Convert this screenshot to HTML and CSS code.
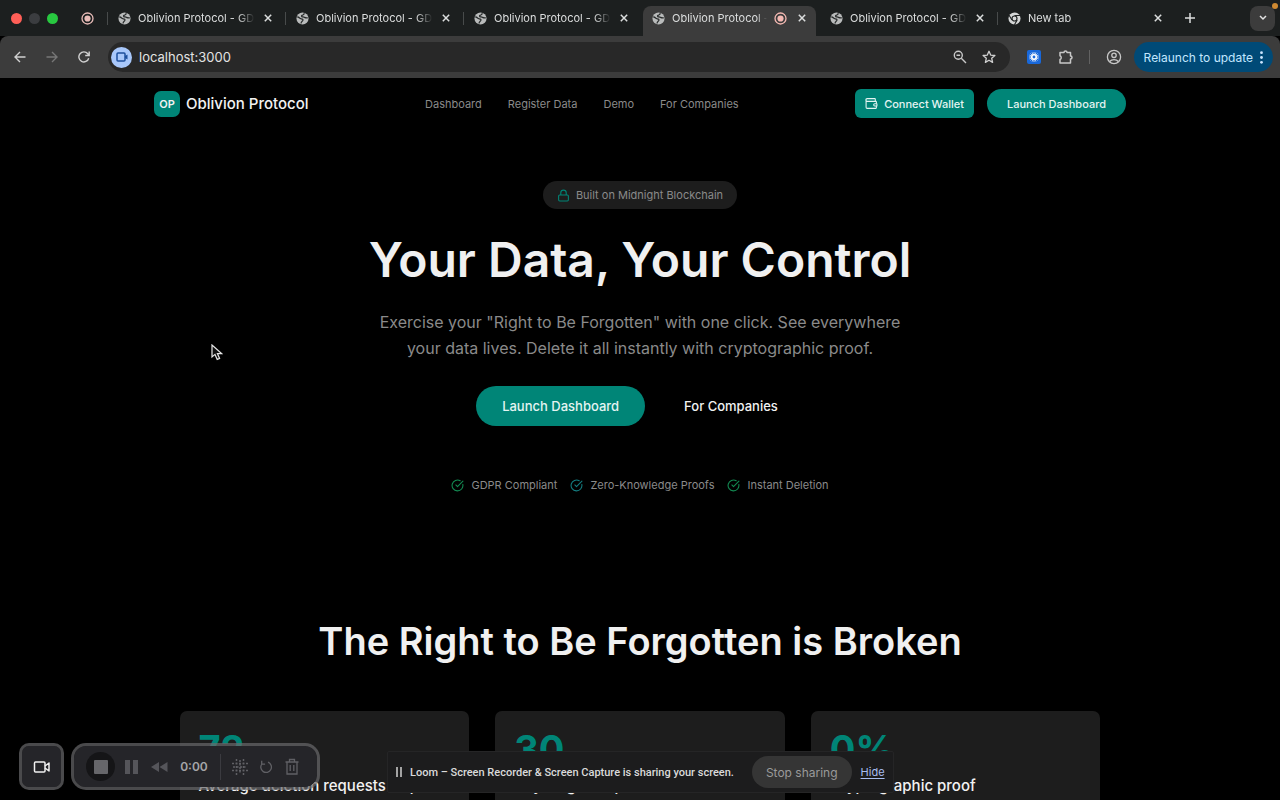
FILE: index.html
```html
<!DOCTYPE html>
<html lang="en">
<head>
<meta charset="utf-8">
<meta name="viewport" content="width=device-width, initial-scale=1">
<title>Oblivion Protocol - GDPR</title>
<link rel="stylesheet" href="styles.css">
</head>
<body>
<svg class="defs" aria-hidden="true">
  <symbol id="globe" viewBox="0 0 14 14"><circle cx="7" cy="7" r="6.5" fill="#b9bbbb"/><path d="M1.4 5.400C3.500 5.200 3.800 6.800 5.200 7.200 6.800 7.600 7.800 7.600 7.400 9 7 10.200 5.600 9.800 5.400 12.400M8.800 1.200C9 3 7.800 3.200 6.600 3.600 5.400 4.200 6.200 5.400 7.600 5.300 9 5.200 9.800 6.800 12.600 6.200" fill="none" stroke="#2a2d2d" stroke-width="1.400"/></symbol>
  <symbol id="x" viewBox="0 0 8 8"><path d="M.8.8l6.4 6.4M7.2.8L.8 7.2" stroke="#dcdede" stroke-width="1.5" fill="none"/></symbol>
  <symbol id="rec" viewBox="0 0 13 13"><circle cx="6.500" cy="6.500" r="5.500" fill="none" stroke="currentColor" stroke-width="1.300"/><circle cx="6.500" cy="6.500" r="3.100" fill="currentColor"/></symbol>
  <symbol id="check" viewBox="0 0 24 24"><path d="M21.8 10A10 10 0 1 1 17 3.335M9 11l3 3L22 4" fill="none" stroke="currentColor" stroke-width="2" stroke-linecap="round" stroke-linejoin="round"/></symbol>
</svg>
<div class="browser">
  <header class="tabbar">
    <div class="lights"><i class="light red"></i><i class="light gray"></i><i class="light green"></i></div>
    <svg class="pinned" width="13" height="13"><use href="#rec"/></svg>
    <div class="tab"><svg width="13" height="13"><use href="#globe"/></svg><span class="tab-title">Oblivion Protocol - GDPR</span><button class="close" aria-label="Close tab"><svg width="8" height="8"><use href="#x"/></svg></button></div>
    <div class="tab"><svg width="13" height="13"><use href="#globe"/></svg><span class="tab-title">Oblivion Protocol - GDPR</span><button class="close" aria-label="Close tab"><svg width="8" height="8"><use href="#x"/></svg></button></div>
    <div class="tab"><svg width="13" height="13"><use href="#globe"/></svg><span class="tab-title">Oblivion Protocol - GDPR</span><button class="close" aria-label="Close tab"><svg width="8" height="8"><use href="#x"/></svg></button></div>
    <div class="tab active"><svg width="13" height="13"><use href="#globe"/></svg><span class="tab-title">Oblivion Protocol - GDPR</span><svg class="tab-rec" width="13" height="13"><use href="#rec"/></svg><button class="close" aria-label="Close tab"><svg width="8" height="8"><use href="#x"/></svg></button></div>
    <div class="tab"><svg width="13" height="13"><use href="#globe"/></svg><span class="tab-title">Oblivion Protocol - GDPR</span><button class="close" aria-label="Close tab"><svg width="8" height="8"><use href="#x"/></svg></button></div>
    <div class="tab"><svg width="13" height="13" viewBox="0 0 14 14"><circle cx="7" cy="7" r="6.500" fill="#d5d7d7"/><circle cx="7" cy="7" r="2.700" fill="#d5d7d7" stroke="#202323" stroke-width="1.300"/><path d="M7 3.700h6M4.200 8.700 1.200 3.500M9.900 8.700 6.900 13.800" stroke="#202323" stroke-width="1.200"/></svg><span class="tab-title">New tab</span><button class="close" aria-label="Close tab"><svg width="8" height="8"><use href="#x"/></svg></button></div>
    <button class="newtab" aria-label="New tab"><svg width="10" height="10" viewBox="0 0 10 10"><path d="M5 0v10M0 5h10" stroke="#dcdede" stroke-width="1.500"/></svg></button>
    <button class="search-tabs" aria-label="Search tabs"><svg width="8" height="6" viewBox="0 0 8 6"><path d="M1 1l3 3 3-3" fill="none" stroke="#e3e3e3" stroke-width="1.500"/></svg><i class="alert"></i></button>
  </header>
  <div class="toolbar">
    <button class="tool" aria-label="Back"><svg width="12" height="12" viewBox="0 0 12 12"><path d="M11.500 6H1M6 1 1 6l5 5" fill="none" stroke="#d0d0d0" stroke-width="1.400"/></svg></button>
    <button class="tool" aria-label="Forward"><svg width="12" height="12" viewBox="0 0 12 12"><path d="M.5 6H11M6 1l5 5-5 5" fill="none" stroke="#777" stroke-width="1.400"/></svg></button>
    <button class="tool" aria-label="Reload"><svg width="12" height="12" viewBox="0 0 12 12"><path d="M10.700 7.200A5 5 0 1 1 9.800 2.800L11 4.200M11.200.5v4H7.200" fill="none" stroke="#d0d0d0" stroke-width="1.400"/></svg></button>
    <div class="omnibox">
      <span class="cam"><svg width="12" height="10" viewBox="0 0 12 10"><rect x="1" y="1" width="8" height="8" rx="1" fill="none" stroke="#1c4f9c" stroke-width="1.500"/><path d="M9 4l2.500-1.500v5L9 6z" fill="#1c4f9c"/></svg></span>
      <input class="url" type="text" value="localhost:3000" aria-label="Address">
      <button class="obtn" aria-label="Zoom"><svg width="14" height="14" viewBox="0 0 14 14"><circle cx="5.300" cy="5.300" r="4" fill="none" stroke="#c8c8c8" stroke-width="1.400"/><path d="M8.300 8.300l4.700 4.700M3.500 5.300h3.600" stroke="#c8c8c8" stroke-width="1.400"/></svg></button>
      <button class="obtn" aria-label="Bookmark"><svg width="14" height="14" viewBox="0 0 14 14"><path d="M7 1.300l1.700 3.800 4.200.4-3.200 2.800.9 4.100L7 10.200l-3.600 2.200.9-4.100L1.100 5.500l4.200-.4z" fill="none" stroke="#d0d0d0" stroke-width="1.300" stroke-linejoin="round"/></svg></button>
    </div>
    <button class="ext" aria-label="Loom"><svg width="14" height="14" viewBox="0 0 14 14"><rect width="14" height="14" rx="2" fill="#1868db"/><path d="M7 2v10M2 7h10M3.500 3.500l7 7M10.500 3.500l-7 7M5.100 2.400l3.800 9.200M8.900 2.400 5.100 11.600M2.400 5.100l9.200 3.800M2.400 8.900l9.200-3.800" stroke="#fff" stroke-width=".7"/><circle cx="7" cy="7" r="3" fill="#fff"/><circle cx="7" cy="7" r="1.400" fill="#1868db"/></svg></button>
    <button class="ext" aria-label="Extensions"><svg width="16" height="16" viewBox="0 0 16 16"><path d="M2 3.500h4a1.500 1.500 0 0 1 3 0h3.500V7a1.500 1.500 0 0 1 0 3v4H2v-3.500a2 2 0 0 0 0-3.700z" fill="none" stroke="#c8c8c8" stroke-width="1.500" stroke-linejoin="round"/></svg></button>
    <i class="divider"></i>
    <button class="ext" aria-label="Profile"><svg width="16" height="16" viewBox="0 0 16 16"><circle cx="8" cy="8" r="6.600" fill="none" stroke="#c8c8c8" stroke-width="1.300"/><circle cx="8" cy="6.300" r="2.200" fill="none" stroke="#c8c8c8" stroke-width="1.300"/><path d="M3.700 12.500c2-2.500 6.600-2.500 8.600 0" fill="none" stroke="#c8c8c8" stroke-width="1.300"/></svg></button>
    <button class="relaunch">Relaunch to update <svg width="3" height="13" viewBox="0 0 3 13"><g fill="#cbe6ff"><circle cx="1.500" cy="1.700" r="1.400"/><circle cx="1.500" cy="6.500" r="1.400"/><circle cx="1.500" cy="11.300" r="1.400"/></g></svg></button>
  </div>

  <div class="page">
    <nav class="nav">
      <a class="brand" href="#"><span class="logo">OP</span>Oblivion Protocol</a>
      <div class="links"><a href="#">Dashboard</a><a href="#">Register Data</a><a href="#">Demo</a><a href="#">For Companies</a></div>
      <div class="actions">
        <button class="btn wallet"><svg width="13" height="13" viewBox="0 0 24 24" fill="none" stroke="currentColor" stroke-width="2" stroke-linejoin="round"><path d="M19 8V4a1 1 0 0 0-1-1H4a2 2 0 0 0 0 5h16a1 1 0 0 1 1 1v3.500M21 16.500V20a1 1 0 0 1-1 1H4a2 2 0 0 1-2-2V5"/><path d="M22 12.500h-4a2 2 0 0 0 0 4h4z"/></svg>Connect Wallet</button>
        <button class="btn pill">Launch Dashboard</button>
      </div>
    </nav>
    <main>
      <section class="hero">
        <div class="badge"><svg width="13" height="13" viewBox="0 0 24 24" fill="none" stroke="currentColor" stroke-width="2"><rect x="3" y="11" width="18" height="11" rx="2"/><path d="M7 11V7a5 5 0 0 1 10 0v4"/></svg>Built on Midnight Blockchain</div>
        <h1>Your Data, Your Control</h1>
        <p class="lead">Exercise your "Right to Be Forgotten" with one click. See everywhere your data lives. Delete it all instantly with cryptographic proof.</p>
        <div class="cta"><button class="btn big">Launch Dashboard</button><button class="btn ghost">For Companies</button></div>
        <ul class="points">
          <li><svg class="green-icon" width="13" height="13"><use href="#check"/></svg>GDPR Compliant</li>
          <li><svg class="teal-icon" width="13" height="13"><use href="#check"/></svg>Zero-Knowledge Proofs</li>
          <li><svg class="green-icon" width="13" height="13"><use href="#check"/></svg>Instant Deletion</li>
        </ul>
      </section>
      <section class="problem">
        <h2>The Right to Be Forgotten is Broken</h2>
        <div class="cards">
          <article class="card"><strong class="stat">72</strong><h3>Average deletion requests required</h3></article>
          <article class="card"><strong class="stat">30</strong><h3>Days legal response</h3></article>
          <article class="card"><strong class="stat">0%</strong><h3>Cryptographic proof</h3></article>
        </div>
      </section>
    </main>

    <svg class="cursor" width="12" height="17" viewBox="0 0 12 17"><path d="M1 1v12l3-2.600 2.200 5 2.400-1-2.200-4.800h4.200z" fill="#111" stroke="#e6e6e6" stroke-width="1.200"/></svg>

    <div class="recorder">
      <button class="rec-cam" aria-label="Camera"><svg width="18" height="14" viewBox="0 0 18 14" fill="none" stroke="#f0f0f0" stroke-width="1.500" stroke-linejoin="round"><rect x="1.500" y="2" width="10.500" height="10" rx="1"/><path d="M12 6l4-3v8l-4-3"/></svg></button>
      <div class="rec-bar">
        <button class="stop" aria-label="Stop"><i></i></button>
        <button class="rb" aria-label="Pause"><svg width="13" height="14" viewBox="0 0 13 14"><path d="M0 0h5v14H0zM8 0h5v14H8z" fill="#55555a"/></svg></button>
        <button class="rb" aria-label="Rewind"><svg width="17" height="12" viewBox="0 0 17 12"><path d="M8 1v10L0 6zM16.500 1v10l-8-5z" fill="#55555a"/></svg></button>
        <span class="time">0:00</span>
        <i class="rec-divider"></i>
        <button class="rb" aria-label="Effects"><svg width="16" height="16" viewBox="0 0 16 16"><path d="M4.500 0v16M11.500 0v16M0 4.500h16M0 11.500h16M8 1v14M1 8h14" stroke="#606065" stroke-width="1.500" stroke-dasharray="2 1.500"/></svg></button>
        <button class="rb" aria-label="Restart"><svg width="13" height="14" viewBox="0 0 13 14"><path d="M2 3.800A5.300 5.300 0 1 0 8 2.200M1.700.8v3.400h3.400" fill="none" stroke="#606065" stroke-width="1.300"/></svg></button>
        <button class="rb" aria-label="Delete"><svg width="14" height="17" viewBox="0 0 14 17"><path d="M.5 4h13M4.500 4V1.500h5V4M2 4v12h10V4M5.200 7v6M8.800 7v6" fill="none" stroke="#606065" stroke-width="1.300"/></svg></button>
      </div>
    </div>

    <div class="share">
      <svg width="6" height="10" viewBox="0 0 6 10"><path d="M1 0v10M5 0v10" stroke="#ddd" stroke-width="1.400"/></svg>
      <span class="share-text">Loom – Screen Recorder &amp; Screen Capture is sharing your screen.</span>
      <button class="stop-share">Stop sharing</button>
      <a class="hide" href="#">Hide</a>
    </div>
  </div>
</div>
</body>
</html>
```
FILE: styles.css
```css
* { box-sizing: border-box; }
body { margin: 0; background: #000; color: #f2f2f2; font-family: Inter, "Liberation Sans", sans-serif; font-size: 11px; }
button { border: 0; padding: 0; margin: 0; background: none; color: inherit; font: inherit; display: flex; align-items: center; justify-content: center; }
a { color: inherit; text-decoration: none; }
svg { flex: none; display: block; }
h1, h2, h3, p, ul { margin: 0; padding: 0; }
.defs { position: absolute; width: 0; height: 0; }

.browser { height: 100vh; display: flex; flex-direction: column; overflow: hidden; }

/* Tab strip */
.tabbar { display: flex; align-items: center; height: 36px; flex: none; background: #1c1f1f; padding: 0 5px 0 11px; }
.lights { display: flex; gap: 7px; }
.light { width: 11px; height: 11px; border-radius: 50%; }
.red { background: #ff5f57; }
.gray { background: #3b3d40; }
.green { background: #28c840; }
.pinned { margin: 0 13px 0 23px; color: #e8bcb8; }
.tab { position: relative; display: flex; align-items: center; flex: 0 1 178px; min-width: 0; height: 36px; padding: 0 13px 0 11px; gap: 7px; color: #dcdede; }
.tab::before { content: ""; position: absolute; left: 0; top: 12px; width: 1px; height: 13px; background: #484b4b; }
.tab.active::before, .tab.active + .tab::before { display: none; }
.tab.active::after { content: ""; position: absolute; z-index: 0; inset: 6px 3px 0 2px; border-radius: 8px 8px 0 0; background: #3c3c3c; }
.tab.active > * { position: relative; z-index: 1; }
.tab-title { flex: 1; min-width: 0; overflow: hidden; white-space: nowrap; -webkit-mask-image: linear-gradient(to right, #000 84%, transparent 98%); mask-image: linear-gradient(to right, #000 84%, transparent 98%); }
.close { width: 8px; height: 16px; }
.active .close { margin-left: 4px; }
.active .tab-title { -webkit-mask-image: linear-gradient(to right, #000 90%, transparent); mask-image: linear-gradient(to right, #000 90%, transparent); }
.tab-rec { color: #f5b9b3; }
.newtab { width: 28px; height: 28px; margin-left: 1px; }
.search-tabs { position: relative; width: 25px; height: 25px; margin-left: auto; border-radius: 8px; background: #3c3c3c; }
.alert { position: absolute; right: -3px; top: -3px; width: 6px; height: 6px; border-radius: 50%; background: #cf8a32; }

/* Toolbar */
.toolbar { display: flex; align-items: center; height: 42px; flex: none; background: #3c3c3c; padding: 0 7px 0 4px; border-radius: 8px 8px 0 0; }
.tool { width: 32px; height: 32px; }
.omnibox { display: flex; align-items: center; flex: 1; height: 30px; margin: 0 8px 0 8px; padding: 0 14px 0 3px; border-radius: 15px; background: #282828; }
.cam { display: flex; align-items: center; justify-content: center; width: 21px; height: 21px; border-radius: 50%; background: #a8c7fa; }
.url { flex: 1; min-width: 0; margin: 0; padding: 0 0 0 7px; border: 0; outline: 0; background: none; color: #e3e3e3; font: 400 13px Inter, sans-serif; }
.obtn { width: 14px; margin-left: 15px; }
.ext { width: 32px; height: 32px; }
.divider { width: 1px; height: 14px; margin: 0 8px 0 7px; background: #626262; }
.relaunch { height: 30px; margin-left: 4px; padding: 0 10px; gap: 7px; border-radius: 15px; background: #004a77; color: #c2e7ff; font-size: 12px; white-space: nowrap; }

/* Page */
.page { position: relative; flex: 1; min-height: 0; overflow: hidden; background: #000; }
.nav { display: flex; align-items: center; justify-content: space-between; max-width: 972px; height: 51px; margin: 0 auto; }
.brand { display: flex; align-items: center; gap: 6px; font-size: 15px; font-weight: 500; }
.logo { display: flex; align-items: center; justify-content: center; width: 26px; height: 26px; border-radius: 7px; background: #008577; font-size: 11px; font-weight: 600; }
.links { display: flex; gap: 26px; color: #8a8a8a; }
.actions { display: flex; gap: 13px; }
.btn { background: #008577; color: #e4f4f2; font-weight: 500; white-space: nowrap; }
.wallet { height: 29px; padding: 0 10px; gap: 6px; border-radius: 6px; }
.pill { height: 29px; padding: 0 20px; border-radius: 15px; }
.hero { display: flex; flex-direction: column; align-items: center; padding-top: 52px; text-align: center; }
.badge { display: flex; align-items: center; height: 28px; padding: 0 14px; gap: 6px; border-radius: 14px; background: #1d1d1d; color: #8a8a8a; }
.badge svg { color: #008577; }
h1 { margin-top: 21px; font-size: 48px; line-height: 60px; font-weight: 600; color: #f0f0f0; }
.lead { max-width: 546px; margin-top: 19px; color: #8a8a8a; font-size: 16px; line-height: 26px; }
.cta { display: flex; gap: 13px; margin-top: 25px; }
.big, .ghost { height: 40px; padding: 0 26px; border-radius: 20px; font-size: 13px; }
.ghost { background: none; color: #f2f2f2; }
.points { display: flex; gap: 13px; margin-top: 51px; list-style: none; color: #8a8a8a; line-height: 16px; }
.points li { display: flex; align-items: center; gap: 7px; }
.green-icon { color: #138a52; }
.teal-icon { color: #147d80; }
.problem { margin-top: 124px; text-align: center; }
h2 { font-size: 38px; line-height: 48px; font-weight: 600; color: #f0f0f0; }
.cards { display: grid; grid-template-columns: repeat(3, minmax(0, 1fr)); gap: 26px; max-width: 921px; margin: 46px auto 0; text-align: left; }
.card { height: 160px; padding: 20px 19px; border-radius: 7px; background: #1d1d1d; }
.stat { display: block; color: #008577; font-size: 38px; line-height: 36px; font-weight: 700; }
h3 { margin-top: 9px; font-size: 15px; line-height: 20px; font-weight: 500; white-space: nowrap; }

/* Overlays */
.cursor { position: absolute; left: 211px; top: 266px; }
.recorder { position: absolute; left: 19px; bottom: 10px; display: flex; gap: 7px; }
.rec-cam, .rec-bar { height: 47px; border: 3px solid rgba(105, 105, 108, .7); background: #252529; background-clip: padding-box; }
.rec-cam { width: 45px; border-radius: 10px; }
.rec-bar { display: flex; align-items: center; padding: 0 12px; border-radius: 15px; }
.stop { width: 29px; height: 29px; border-radius: 50%; background: #151517; }
.stop i { width: 14px; height: 14px; border-radius: 1px; background: #66666a; }
.rb { width: 26px; height: 26px; }
.stop + .rb { margin: 0 2px 0 3px; }
.time { width: 44px; text-align: center; color: #a5a5a8; font-size: 12px; font-weight: 600; }
.rec-divider { width: 1px; height: 26px; margin: 0 6px 0 4px; background: #3b3b40; }
.share { position: absolute; left: 387px; bottom: 7px; display: flex; align-items: center; height: 42px; padding: 0 8px; background: #1c1c1d; border: 1px solid #252526; border-radius: 2px; }
.share-text { margin: 0 18px 0 8px; color: #dadada; font-family: Roboto, sans-serif; font-weight: 500; white-space: nowrap; }
.stop-share { height: 32px; padding: 0 14px; border-radius: 16px; background: #353535; color: #9a9a9a; font-size: 12px; white-space: nowrap; }
.hide { margin-left: 9px; color: #a8bdf0; text-decoration: underline; text-underline-offset: 2px; }
```
